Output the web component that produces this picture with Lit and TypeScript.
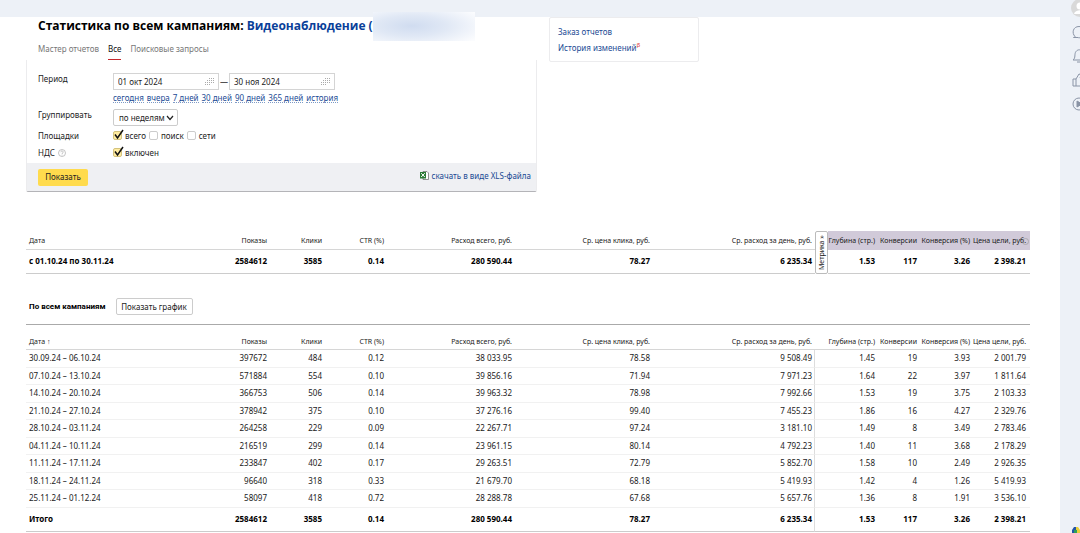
import { LitElement, html, svg, css } from "lit";
import { customElement } from "lit/decorators.js";

const HEADERS = ["Дата", "Показы", "Клики", "CTR (%)", "Расход всего, руб.", "Ср. цена клика, руб.", "Ср. расход за день, руб.", "Глубина (стр.)", "Конверсии", "Конверсия (%)", "Цена цели, руб."];
const TOTAL = ["2584612", "3585", "0.14", "280 590.44", "78.27", "6 235.34", "1.53", "117", "3.26", "2 398.21"];
const ROWS = [
  ["30.09.24 – 06.10.24", "397672", "484", "0.12", "38 033.95", "78.58", "9 508.49", "1.45", "19", "3.93", "2 001.79"],
  ["07.10.24 – 13.10.24", "571884", "554", "0.10", "39 856.16", "71.94", "7 971.23", "1.64", "22", "3.97", "1 811.64"],
  ["14.10.24 – 20.10.24", "366753", "506", "0.14", "39 963.32", "78.98", "7 992.66", "1.53", "19", "3.75", "2 103.33"],
  ["21.10.24 – 27.10.24", "378942", "375", "0.10", "37 276.16", "99.40", "7 455.23", "1.86", "16", "4.27", "2 329.76"],
  ["28.10.24 – 03.11.24", "264258", "229", "0.09", "22 267.71", "97.24", "3 181.10", "1.49", "8", "3.49", "2 783.46"],
  ["04.11.24 – 10.11.24", "216519", "299", "0.14", "23 961.15", "80.14", "4 792.23", "1.40", "11", "3.68", "2 178.29"],
  ["11.11.24 – 17.11.24", "233847", "402", "0.17", "29 263.51", "72.79", "5 852.70", "1.58", "10", "2.49", "2 926.35"],
  ["18.11.24 – 24.11.24", "96640", "318", "0.33", "21 679.70", "68.18", "5 419.93", "1.42", "4", "1.26", "5 419.93"],
  ["25.11.24 – 01.12.24", "58097", "418", "0.72", "28 288.78", "67.68", "5 657.76", "1.36", "8", "1.91", "3 536.10"],
];
const RANGES = ["сегодня", "вчера", "7 дней", "30 дней", "90 дней", "365 дней", "история"];

@customElement("app-root")
export class AppRoot extends LitElement {
  static styles = css`
    :host { display: block; font-family: "Noto Sans", "Open Sans", sans-serif; font-size: 8px; line-height: 12px; color: #222; background: #edf1f7; }
    * { box-sizing: border-box; }
    a { color: #1a4a94; text-decoration: none; }
    input, select, button { font: inherit; color: inherit; margin: 0; }
    .shell { display: grid; grid-template-columns: minmax(0, 1fr) 20px; min-height: 100vh; overflow: hidden; }
    .page { margin-top: 17px; background: #fff; padding: 0 30px 0 26px; }
    .top { display: grid; grid-template-columns: minmax(0, 511px) 150px; column-gap: 12px; align-items: start; }
    h1 { margin: 0; padding: 0 0 0 12px; font: 700 12px/17px "Open Sans", "Noto Sans", sans-serif; color: #000; white-space: nowrap; display: flex; }
    h1 a { color: #0a3f99; margin-left: 3px; }
    .masked { position: relative; width: 90px; }
    .masked::after { content: ""; position: absolute; left: 0; top: -5px; width: 102px; height: 29px; background: radial-gradient(ellipse 75% 80% at 38% 48%, #d0dcf0 0%, #e0e8f5 45%, #fbfcfe 100%); }
    .tabs { display: flex; gap: 9px; padding: 8px 0 0 12px; line-height: 14px; }
    .tabs a { color: #777; height: 18px; }
    .tabs .active { color: #111; box-shadow: inset 0 -1px 0 #c4282d; }
    .panel { border: 1px solid #ececee; border-top: 0; border-bottom-color: #b4b4b8; border-radius: 0 0 2px 2px; }
    .fields { display: grid; grid-template-columns: 75px 1fr; padding: 13px 0 0 11px; }
    .label { display: flex; align-items: center; gap: 3px; }
    .fields .label:first-child { align-items: flex-start; }
    .fields label.label { align-items: flex-start; }
    .dates { display: flex; align-items: center; gap: 1px; height: 17px; }
    .date { position: relative; width: 106px; height: 17px; }
    .date input { width: 100%; height: 17px; border: 1px solid #d4d4d4; padding: 0 20px 0 4px; background: #fff; display: block; outline: 0; }
    .date svg { position: absolute; right: 4px; top: 5px; }
    .ranges { display: flex; gap: 3px; line-height: 10px; margin: 3px 0 5px; height: 11px; }
    .ranges a { border-bottom: 1px dotted #7f9bc6; height: 10px; }
    .group { position: relative; width: 65px; height: 18px; }
    .group select { appearance: none; width: 65px; height: 17px; border: 1px solid #ccc; border-radius: 2px; background: #fff; padding: 0 0 0 5px; display: block; }
    .group svg { position: absolute; right: 4px; top: 6px; pointer-events: none; }
    .checks { display: flex; gap: 3px; height: 17px; align-items: center; }
    .check { display: flex; align-items: center; gap: 3px; position: relative; }
    .check input { appearance: none; width: 9px; height: 9px; border: 1px solid #ccc; border-radius: 2px; background: #fff; }
    .check input:checked { background: #ffeba0; border-color: #d3c27c; }
    .check svg { position: absolute; left: 0; top: 0; pointer-events: none; }
    .foot { display: flex; justify-content: space-between; align-items: center; height: 28px; margin-top: 2px; padding: 0 5px 0 11px; background: #eff0f3; }
    .primary { height: 17px; width: 50px; padding: 0; border: 0; border-radius: 2px; background: #ffdb4d; }
    .xls { display: flex; gap: 3px; align-items: center; padding-bottom: 3px; }
    .side { border: 1px solid #ececee; border-radius: 2px; padding: 6px 8px; height: 45px; line-height: 16px; }
    .side a { display: block; }
    .side sup { color: #d33; font-size: 6px; line-height: 0; }
    table { width: 100%; border-collapse: separate; border-spacing: 0; table-layout: fixed; }
    th, td { padding: 0 3px 0 0; text-align: right; white-space: nowrap; border-bottom: 1px solid #f1f1f1; font-weight: 400; color: #1a1a1a; }
    th:first-child, td:first-child { text-align: left; padding-left: 3px; }
    th:last-child, td:last-child { padding-right: 4px; }
    th { font-size: 7px; border-bottom-color: #d6d6d6; }
    .summary { margin-top: 39px; }
    .summary th { height: 19px; padding-top: 2px; }
    .summary td { height: 24px; padding-bottom: 1px; font-weight: 700; color: #000; border-bottom-color: #ccc; }
    .summary .metric { background: #d1cad9; border-bottom-color: #d1cad9; }
    .summary .tabcell { padding: 0; border: 0; height: 43px; }
    .tab { writing-mode: vertical-rl; transform: rotate(180deg); font-size: 7px; width: 13px; height: 43px; padding: 0; border: 1px solid #bbb; border-radius: 2px; background: #fff; display: block; line-height: 11px; text-align: center; }
    .hint { position: absolute; right: 1px; top: 7px; }
    .hinted { position: relative; }
    .bar { display: flex; align-items: center; gap: 10px; height: 51px; padding: 15px 3px 0; border-bottom: 1px solid #aaa; }
    .bar strong { color: #000; font-family: Roboto, "Noto Sans", sans-serif; }
    .bar button { height: 17px; width: 77px; padding: 0; border: 1px solid #ccc; border-radius: 2px; background: #fff; }
    .detail th { height: 25px; padding-top: 9px; }
    .detail td { padding-bottom: 1px; }
    .detail tbody td { height: 18px; }
    .detail tbody tr:nth-child(even) td { height: 17px; }
    .detail td:nth-child(7) { border-right: 1px solid #ddd; padding-right: 2px; }
    .detail tfoot td { height: 24px; font-weight: 700; color: #000; border-bottom-color: #ccc; }
    .rail { display: flex; flex-direction: column; align-items: flex-start; padding-left: 11px; margin-top: -4px; color: #8a94a6; }
    .rail button { border: 0; background: none; padding: 0; width: 16px; height: 24px; display: block; color: inherit; }
    .rail svg { display: block; }
    .rail .app { margin-top: auto; height: 6px; }
  `;

  private dots() {
    const pts: [number, number][] = [[5, 0], [7, 0], [9, 0], [3, 2], [5, 2], [7, 2], [9, 2], [1, 4], [3, 4], [5, 4], [7, 4], [9, 4], [1, 6], [3, 6], [5, 6]];
    return html`<svg width="10" height="7" viewBox="0 0 10 7" fill="#aaa">${pts.map(([x, y]) => svg`<rect x=${x - 1} y=${y} width="1" height="1"/>`)}</svg>`;
  }
  private date(value: string, label: string) {
    return html`<span class="date"><input type="text" aria-label=${label} .value=${value} />${this.dots()}</span>`;
  }
  private check(text: string, on: boolean) {
    return html`<label class="check"><input type="checkbox" .checked=${on} />${on
      ? html`<svg width="12" height="12" viewBox="0 0 12 12" overflow="visible"><path d="M2 4.500 4.500 8 10 0" fill="none" stroke="#111" stroke-width="1.500"/></svg>` : ""}<span>${text}</span></label>`;
  }
  private cols(widths: number[]) {
    return html`<colgroup>${widths.map((w) => html`<col style="width:${w}px" />`)}</colgroup>`;
  }

  render() {
    return html`<div class="shell">
      <main class="page">
        <div class="top">
          <section>
            <h1>Статистика по всем кампаниям: <a href="#">Видеонаблюдение (</a><span class="masked"></span></h1>
            <nav class="tabs"><a href="#">Мастер отчетов</a><a href="#" class="active">Все</a><a href="#">Поисковые запросы</a></nav>
            <form class="panel" @submit=${(e: Event) => e.preventDefault()}>
              <div class="fields">
                <span class="label">Период</span>
                <div class="dates">${this.date("01 окт 2024", "Начало периода")}<span>—</span>${this.date("30 ноя 2024", "Конец периода")}</div>
                <span></span>
                <div class="ranges">${RANGES.map((r) => html`<a href="#">${r}</a>`)}</div>
                <label class="label" for="group">Группировать</label>
                <div class="group"><select id="group"><option>по неделям</option></select><svg width="8" height="6" viewBox="0 0 8 6"><path d="M1 1 4 4.500 7 1" fill="none" stroke="#222" stroke-width="1.200"/></svg></div>
                <span class="label">Площадки</span>
                <div class="checks">${this.check("всего", true)}${this.check("поиск", false)}${this.check("сети", false)}</div>
                <span class="label">НДС <svg width="8" height="8" viewBox="0 0 8 8" fill="none" stroke="#aaa" stroke-width=".7"><circle cx="4" cy="4" r="3.500"/><path d="M2.800 3.200C2.800 1.500 5.200 1.600 5.200 3.100 5.200 4 4 4 4 5M4 5.600v.8"/></svg></span>
                <div class="checks">${this.check("включен", true)}</div>
              </div>
              <div class="foot">
                <button class="primary">Показать</button>
                <a class="xls" href="#"><svg width="9" height="9" viewBox="0 0 9 9"><path d="M3 .5h4L8.500 2v6.500H3z" fill="#fff" stroke="#777" stroke-width=".8"/><rect y="1" width="6" height="6.500" fill="#2b7a35"/><path d="M1.200 2.200 4.800 6M4.800 2.200 1.200 6" stroke="#fff"/></svg>скачать в виде XLS-файла</a>
              </div>
            </form>
          </section>
          <aside class="side"><a href="#">Заказ отчетов</a><a href="#">История изменений<sup>β</sup></a></aside>
        </div>

        <table class="summary">
          ${this.cols([189, 55, 55, 62, 128, 138, 162, 13, 50, 42, 53, 57])}
          <thead><tr>
            ${HEADERS.slice(0, 7).map((h) => html`<th>${h}</th>`)}
            <th class="tabcell" rowspan="2"><button class="tab">Метрика »</button></th>
            ${HEADERS.slice(7, 10).map((h) => html`<th class="metric">${h}</th>`)}
            <th class="metric hinted">${HEADERS[10]}<svg class="hint" width="7" height="7" viewBox="0 0 8 8" fill="none" stroke="#999" stroke-width=".7"><circle cx="4" cy="4" r="3.500"/></svg></th>
          </tr>
          <tr>${["с 01.10.24 по 30.11.24", ...TOTAL].map((c) => html`<td>${c}</td>`)}</tr></thead>
        </table>

        <div class="bar"><strong>По всем кампаниям</strong><button>Показать график</button></div>

        <table class="detail">
          ${this.cols([189, 55, 55, 62, 128, 138, 162, 63, 42, 53, 57])}
          <thead><tr>${HEADERS.map((h, i) => html`<th>${h}${i === 0 ? " ↑" : ""}</th>`)}</tr></thead>
          <tbody>${ROWS.map((r) => html`<tr>${r.map((c) => html`<td>${c}</td>`)}</tr>`)}</tbody>
          <tfoot><tr>${["Итого", ...TOTAL].map((c) => html`<td>${c}</td>`)}</tr></tfoot>
        </table>
      </main>

      <aside class="rail">
        <button aria-label="Профиль"><svg width="18" height="18" viewBox="0 0 18 18"><circle cx="9" cy="9" r="9" fill="#d9d9d9"/><circle cx="9" cy="7" r="3.500" fill="#fff"/><path d="M3 15c1-5 11-5 12 0" fill="#fff"/></svg></button>
        <button aria-label="Сообщения"><svg width="16" height="16" viewBox="0 0 16 16" fill="none" stroke="currentColor"><path d="M4 12.500C.5 9 2 2.500 8 2.500S15 7 13 10.500 8 14 7 13.500H2.500C3.500 13.500 4 13 4 12.500z"/></svg></button>
        <button aria-label="Уведомления"><svg width="16" height="16" viewBox="0 0 16 16" fill="none" stroke="currentColor"><path d="M2 12c3-2 1-6 3-8.500s5-2 7 0 0 6.500 3 8.500zM6 14h4"/></svg></button>
        <button aria-label="Оценка"><svg width="16" height="16" viewBox="0 0 16 16" fill="none" stroke="currentColor"><path d="M2 7h3v7H2zM5 7l3-5c2 0 2 2 1 4h5l-1 8H5"/></svg></button>
        <button aria-label="Видео"><svg width="16" height="16" viewBox="0 0 16 16" fill="none" stroke="currentColor"><circle cx="8" cy="8" r="6"/><path d="M6 5v6l5-3z" fill="currentColor"/></svg></button>
        <button class="app" aria-label="Приложение"><svg width="10" height="6" viewBox="0 0 10 6"><path d="M1 6V3l2-3h3v6z" fill="#2255a5"/><path d="M5 0h2l2 3v3H5z" fill="#e8cf3a"/><path d="M3 3h3v3H3z" fill="#2f9f5a"/></svg></button>
      </aside>
    </div>`;
  }
}
